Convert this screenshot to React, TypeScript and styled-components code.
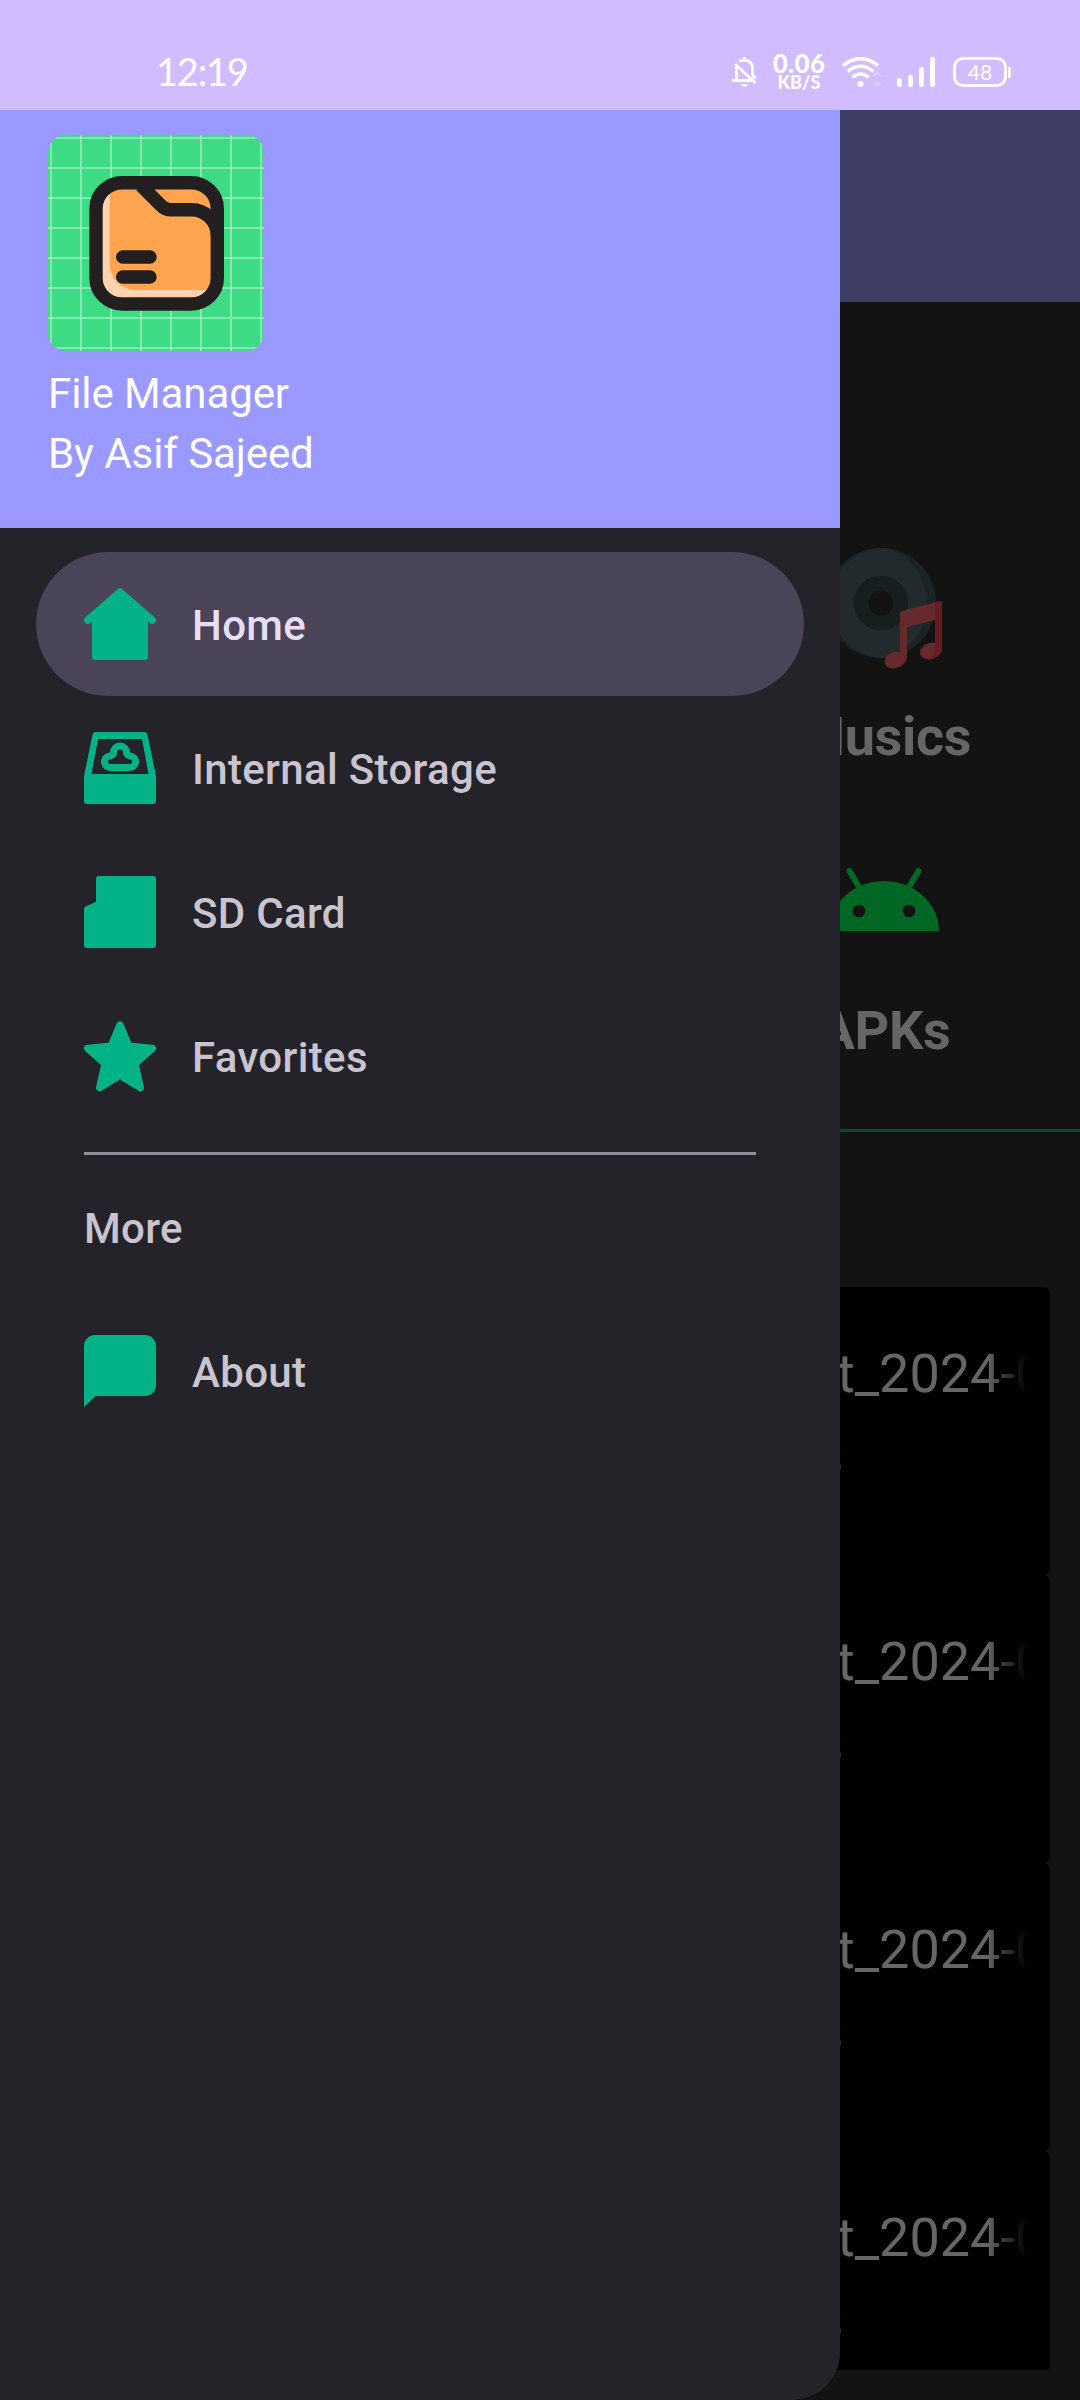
import React from "react";
import styled, { createGlobalStyle } from "styled-components";

const GlobalStyle = createGlobalStyle`
  body { margin: 0; background: #131313; }
  * { box-sizing: border-box; }
  svg { display: block; flex: none; }
`;

const Screen = styled.div`
  width: 1080px;
  height: 2400px;
  display: flex;
  flex-direction: column;
  overflow: hidden;
  background: #131313;
  font-family: Roboto, "Liberation Sans", sans-serif;
`;

const StatusBar = styled.header`
  flex: none;
  height: 110px;
  padding: 33px 69px 0 156px;
  display: flex;
  align-items: flex-start;
  justify-content: space-between;
  background: #d1bcff;
  color: #fff;
`;

const Clock = styled.time`
  margin-top: 16px;
  font: 400 38px/44px Lato, sans-serif;
  letter-spacing: -1.2px;
`;

const StatusIcons = styled.div`
  display: flex;
  align-items: center;
  height: 44px;
  margin-top: 17px;
`;

const NetSpeed = styled.div`
  width: 54px;
  margin: 0 16px 0 15px;
  display: flex;
  flex-direction: column;
  align-items: center;
  font-family: Lato, sans-serif;
  font-weight: 900;
`;

const SpeedValue = styled.span`
  font-size: 26px;
  line-height: 20px;
  letter-spacing: 0.3px;
`;

const SpeedUnit = styled.span`
  font-size: 18px;
  line-height: 18px;
`;

const Battery = styled.div`
  display: flex;
  align-items: center;
  gap: 1px;
  margin-left: 18px;
`;

const BatteryBody = styled.div`
  width: 54px;
  height: 30px;
  border: 3px solid #fff;
  border-radius: 10px;
  display: flex;
  align-items: center;
  justify-content: center;
  font: 400 21px/24px Lato, sans-serif;
`;

const BatteryTip = styled.div`
  width: 3px;
  height: 11px;
  border-radius: 0 2px 2px 0;
  background: #fff;
`;

const Body = styled.div`
  flex: 1;
  min-height: 0;
  display: grid;
  grid-template: minmax(0, 1fr) / 1080px;

  > * {
    grid-area: 1 / 1;
  }
`;

const Page = styled.main`
  display: flex;
  flex-direction: column;
  color: #666;
`;

const AppBar = styled.div`
  flex: none;
  height: 192px;
  background: #3d3d66;
`;

const Categories = styled.section`
  flex: none;
  height: 830px;
  padding: 244px 66px 0 0;
  display: flex;
  flex-direction: column;
  align-items: flex-end;
  border-bottom: 3px solid #07483a;
`;

const Category = styled.div<{ $gap: number }>`
  flex: none;
  width: 260px;
  height: 302px;
  display: flex;
  flex-direction: column;
  align-items: center;
  gap: ${(p) => p.$gap}px;
`;

const CategoryLabel = styled.span`
  font-size: 54px;
  line-height: 64px;
  font-weight: 700;
  letter-spacing: -0.3px;
  padding-left: 1px;
`;

const FileList = styled.section`
  flex: none;
  height: 1083px;
  margin: 155px 30px 0;
  overflow: hidden;
`;

const FileCard = styled.article`
  height: 288px;
  padding: 55px 25px 0 0;
  display: flex;
  flex-direction: column;
  align-items: flex-end;
  border-radius: 6px;
  background: #000;
`;

const FileName = styled.div`
  width: 188px;
  overflow: hidden;
  white-space: nowrap;
  font-size: 54px;
  line-height: 64px;
  mask-image: linear-gradient(to right, #000 150px, transparent 190px);
`;

const FileSize = styled.div`
  width: 205px;
  margin-top: 35px;
  font-size: 36px;
  line-height: 42px;
`;

const Drawer = styled.nav`
  z-index: 1;
  width: 840px;
  overflow: hidden;
  border-radius: 0 0 48px 0;
  background: #242329;
`;

const DrawerHeader = styled.div`
  height: 418px;
  padding: 25px 48px 0;
  background: #9999ff;
  color: #fff;
`;

const Title = styled.div`
  font-size: 42px;
  line-height: 60px;
  letter-spacing: -0.08px;

  &:first-of-type {
    margin-top: 13px;
  }
`;

const Menu = styled.div`
  padding: 24px 36px 0;
`;

const MenuItem = styled.a<{ $active?: boolean }>`
  height: 144px;
  padding: 2px 48px 0;
  display: flex;
  align-items: center;
  gap: 36px;
  border-radius: 72px;
  background: ${(p) => (p.$active ? "#4a4458" : "transparent")};
  color: ${(p) => (p.$active ? "#e8def8" : "#cac4d0")};
  font-size: 42px;
  font-weight: 500;
  letter-spacing: 0.34px;

  svg {
    margin-top: -2px;
  }
`;

const Divider = styled.hr`
  height: 3px;
  margin: 24px 48px 0;
  border: 0;
  background: #938f99;
`;

const SignalIcon = styled.svg`
  margin-left: 15px;
`;

const GREEN = "#03b286";

const BellOff = () => (
  <svg width="25" height="30" viewBox="0 0 25 30" fill="none" stroke="#fff" strokeWidth="3">
    <path d="M7 4.5C9 3.4 10.5 3 12.5 3c5 0 8 4 8 8v7M4.5 10v13M0 23.5h20M3 7l20.500 19M20.500 18l3 3.500" />
    <path d="M12.500 0v3" />
    <path d="M8.500 27h8l-3 3h-2z" fill="#fff" stroke="none" />
  </svg>
);

const Wifi = () => (
  <svg width="40" height="30" viewBox="0 0 40 30" fill="none" stroke="#fff" strokeWidth="3.600">
    <path d="M1 8.700C12-.7 25-.7 36 8.700M5.500 14.500c8-7 18-7 26 0M10.500 20.500c5-4.500 11-4.500 16 0" />
    <circle cx="18.500" cy="27" r="3.100" fill="#fff" stroke="none" />
    <path d="M31 19.500l4-3.500 4 3.500M31 25l4 3.500 4-3.500" stroke="#ddccff" strokeWidth="2.500" />
  </svg>
);

const Signal = () => (
  <SignalIcon width="38" height="30" viewBox="0 0 38 30" fill="#fff">
    <rect x="0" y="21" width="5" height="9" rx="2" />
    <rect x="11" y="18" width="5" height="12" rx="2" />
    <rect x="22" y="10" width="5" height="20" rx="2" />
    <rect x="33" y="0" width="5" height="30" rx="2" />
  </SignalIcon>
);

const gridLines = [3, 33, 63, 93, 123, 153, 183, 213];

const Logo = () => (
  <svg width="216" height="216" viewBox="0 0 216 216">
    <defs>
      <clipPath id="tile"><rect width="216" height="216" rx="18" /></clipPath>
      <clipPath id="folder"><rect x="48" y="47.500" width="121.500" height="121.500" rx="25" /></clipPath>
    </defs>
    <g clipPath="url(#tile)">
      <rect width="216" height="216" fill="#3ddc84" />
      <g stroke="#fff" strokeOpacity=".36" strokeWidth="2">
        {gridLines.map((p) => (
          <path key={p} d={`M${p} 0V216M0 ${p}H216`} />
        ))}
      </g>
    </g>
    <g clipPath="url(#folder)">
      <rect x="48" y="47" width="122" height="122" fill="#ffd3b0" />
      <path d="M61.700 40H175V155H87.500A25.800 25.800 0 0 1 61.700 129.500Z" fill="#ffa44f" />
    </g>
    <g fill="none" stroke="#231f20" strokeWidth="13.400">
      <rect x="48" y="47.700" width="121.300" height="121.300" rx="26" />
      <path d="M93 50.500L112.500 70Q117 74.700 122 74.700H143.500A25.800 25.800 0 0 1 169.300 100.500" />
      <path d="M74.700 122H102M74.700 142H102" strokeLinecap="round" />
    </g>
  </svg>
);

const HomeIcon = () => (
  <svg width="72" height="72" viewBox="0 0 72 72" fill={GREEN}>
    <path d="M33.800.9a3.400 3.400 0 0 1 4.400 0L70.800 29.500a3.700 3.700 0 0 1-4.700 5.700L64 33.500V69a3 3 0 0 1-3 3H11a3 3 0 0 1-3-3V33.500L5.900 35.200a3.700 3.700 0 0 1-4.700-5.700Z" />
  </svg>
);

const StorageIcon = () => (
  <svg width="72" height="72" viewBox="0 0 72 72" fill={GREEN}>
    <path fillRule="evenodd" d="M11.500 0h49a3 3 0 0 1 3 2.500L72 44v25a3 3 0 0 1-3 3H3a3 3 0 0 1-3-3V44L8.500 2.500a3 3 0 0 1 3-2.500ZM14 7 7.500 42h57L58 7Z" />
    <path d="M27 35.500H45a5.600 5.600 0 0 0 1.500-11.500q-4-.8-4-3.500a6.500 6.500 0 0 0-13 0q0 2.700-4 3.500A5.600 5.600 0 0 0 27 35.500Z" fill="none" stroke={GREEN} strokeWidth="7" />
  </svg>
);

const SdCardIcon = () => (
  <svg width="72" height="72" viewBox="0 0 72 72" fill={GREEN}>
    <path d="M15 0H69a3 3 0 0 1 3 3V69a3 3 0 0 1-3 3H3a3 3 0 0 1-3-3V33q0-2 2-2.800L12 25.700V3a3 3 0 0 1 3-3Z" />
  </svg>
);

const StarIcon = () => (
  <svg width="72" height="72" viewBox="0 0 72 72" fill={GREEN}>
    <path d="M32.500 3.700Q33.700 1.300 36 1.300T39.500 3.700L47.300 22.700 69 24.700Q71.500 25 72 27.200T70.800 31L55 45 60 67.200Q60.400 69.500 58.500 70.700T54.500 70.700L36 59.500 17.500 70.700Q15.400 71.900 13.500 70.700T12 67.200L17 45 1.200 31Q-.5 29.400 0 27.200T3 24.700L24.700 22.700Z" />
  </svg>
);

const AboutIcon = () => (
  <svg width="72" height="72" viewBox="0 0 72 72" fill={GREEN}>
    <path d="M11 0H61A11 11 0 0 1 72 11V50A11 11 0 0 1 61 61H11.500L0 72V11A11 11 0 0 1 11 0Z" />
  </svg>
);

const MusicIcon = () => (
  <svg width="120" height="124" viewBox="0 0 120 124">
    <circle cx="57" cy="57" r="55" fill="#1b2327" />
    <path d="M61 2a55 55 0 1 0 0 110C91 103 103 78 103 57S90 9 61 2Z" fill="#232a2d" />
    <circle cx="57" cy="57" r="27.300" fill="#161f1d" />
    <circle cx="57" cy="57" r="12.500" fill="#131313" />
    <path d="M76 65.500 116.500 55Q118 55 118 57V103C118 108 111 113.500 105 113.500S95.500 109 96 106C97 99 107 95 111 97V74L83 81V111C83 117 75 122.500 69 122.500S60 118 61 114C62 107 72 104 76 106.500Z" fill="#66292c" />
    <path d="M111 56.500 116.500 55Q118 55 118 57V103C118 108 111 113 104.500 113.500Q111 109 111 103Z" fill="#661d22" />
  </svg>
);

const AndroidIcon = () => (
  <svg width="120" height="120" viewBox="0 0 120 120">
    <path d="M5 83A55 50 0 0 1 115 83Z" fill="#006725" />
    <path d="M25.500 23 37 42.500M94.500 23 83 42.500" stroke="#006725" strokeWidth="6" strokeLinecap="round" />
    <circle cx="35" cy="63" r="6.300" fill="#131313" />
    <circle cx="85" cy="63" r="6.300" fill="#131313" />
  </svg>
);

const menu = [
  { label: "Home", Icon: HomeIcon, active: true },
  { label: "Internal Storage", Icon: StorageIcon },
  { label: "SD Card", Icon: SdCardIcon },
  { label: "Favorites", Icon: StarIcon },
];

export default function App() {
  return (
    <Screen>
      <GlobalStyle />
      <StatusBar>
        <Clock>12:19</Clock>
        <StatusIcons>
          <BellOff />
          <NetSpeed>
            <SpeedValue>0.06</SpeedValue>
            <SpeedUnit>KB/S</SpeedUnit>
          </NetSpeed>
          <Wifi />
          <Signal />
          <Battery>
            <BatteryBody>48</BatteryBody>
            <BatteryTip />
          </Battery>
        </StatusIcons>
      </StatusBar>
      <Body>
        <Page>
          <AppBar />
          <Categories>
            <Category $gap={35}>
              <MusicIcon />
              <CategoryLabel>Musics</CategoryLabel>
            </Category>
            <Category $gap={31}>
              <AndroidIcon />
              <CategoryLabel>APKs</CategoryLabel>
            </Category>
          </Categories>
          <FileList>
            {[0, 1, 2, 3].map((i) => (
              <FileCard key={i}>
                <FileName>t_2024-0</FileName>
                <FileSize>B</FileSize>
              </FileCard>
            ))}
          </FileList>
        </Page>
        <Drawer>
          <DrawerHeader>
            <Logo />
            <Title>File Manager</Title>
            <Title>By Asif Sajeed</Title>
          </DrawerHeader>
          <Menu>
            {menu.map(({ label, Icon, active }) => (
              <MenuItem key={label} $active={active}>
                <Icon />
                {label}
              </MenuItem>
            ))}
            <Divider />
            <MenuItem as="div">More</MenuItem>
            <MenuItem>
              <AboutIcon />
              About
            </MenuItem>
          </Menu>
        </Drawer>
      </Body>
    </Screen>
  );
}
